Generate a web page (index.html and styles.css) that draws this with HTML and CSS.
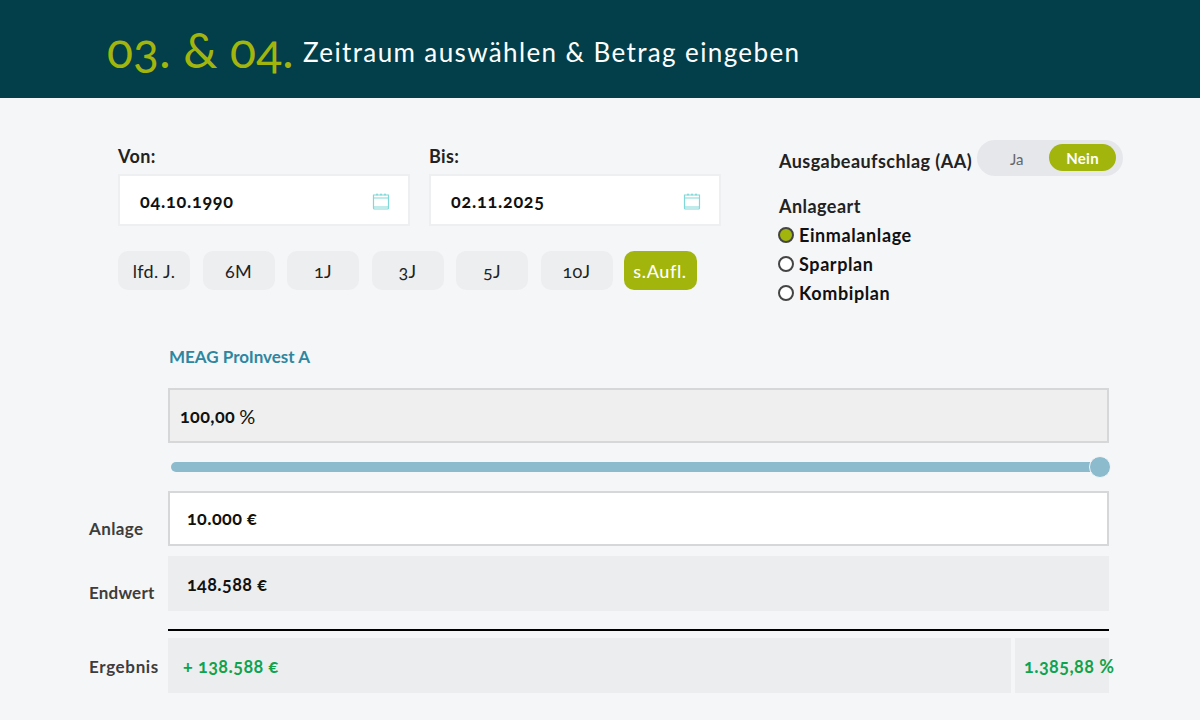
FILE: index.html
```html
<!DOCTYPE html>
<html lang="de">
<head>
<meta charset="utf-8">
<title>Zeitraum auswählen &amp; Betrag eingeben</title>
<link rel="stylesheet" href="styles.css">
</head>
<body>
<header class="hero">
  <span class="hero-num">03. &amp; 04.</span>
  <h1 class="hero-title">Zeitraum auswählen &amp; Betrag eingeben</h1>
</header>
<main class="page">
  <section class="top">
    <div class="dates">
      <div class="date-row">
        <div class="date-field">
          <label class="date-label">Von:</label>
          <div class="date-box"><span class="date-value">04.10.1990</span>
            <svg class="cal" viewBox="0 0 18 18" width="18" height="18"><path d="M1.5 3h15v13a1 1 0 0 1-1 1h-13a1 1 0 0 1-1-1z M1.5 6h15 M1.5 15h15" fill="none" stroke="#80d8d8" stroke-width="1.2"/><circle cx="5" cy="2.5" r="1" fill="#80d8d8"/><circle cx="9" cy="2.5" r="1" fill="#80d8d8"/><circle cx="13" cy="2.5" r="1" fill="#80d8d8"/></svg>
          </div>
        </div>
        <div class="date-field">
          <label class="date-label">Bis:</label>
          <div class="date-box"><span class="date-value">02.11.2025</span>
            <svg class="cal" viewBox="0 0 18 18" width="18" height="18"><path d="M1.5 3h15v13a1 1 0 0 1-1 1h-13a1 1 0 0 1-1-1z M1.5 6h15 M1.5 15h15" fill="none" stroke="#80d8d8" stroke-width="1.2"/><circle cx="5" cy="2.5" r="1" fill="#80d8d8"/><circle cx="9" cy="2.5" r="1" fill="#80d8d8"/><circle cx="13" cy="2.5" r="1" fill="#80d8d8"/></svg>
          </div>
        </div>
      </div>
      <div class="ranges">
        <button class="range">lfd. J.</button>
        <button class="range">6M</button>
        <button class="range">1J</button>
        <button class="range">3J</button>
        <button class="range">5J</button>
        <button class="range">10J</button>
        <button class="range range-on">s.Aufl.</button>
      </div>
    </div>
    <div class="options">
      <div class="aa-row">
        <span class="opt-label aa-label">Ausgabeaufschlag (AA)</span>
        <div class="toggle"><span class="toggle-off">Ja</span><span class="toggle-on">Nein</span></div>
      </div>
      <div class="opt-label type-title">Anlageart</div>
      <div class="radio"><span class="dot dot-on"></span>Einmalanlage</div>
      <div class="radio"><span class="dot"></span>Sparplan</div>
      <div class="radio"><span class="dot"></span>Kombiplan</div>
    </div>
  </section>
  <section class="calc">
    <div class="fund">MEAG ProInvest A</div>
    <div class="box box-share"><b class="val">100,00</b> <span class="unit">%</span></div>
    <div class="slider"><span class="thumb"></span></div>
    <div class="row row-anlage">
      <span class="row-label">Anlage</span>
      <div class="box box-input"><b class="val">10.000 €</b></div>
    </div>
    <div class="row row-end">
      <span class="row-label">Endwert</span>
      <div class="box box-grey"><b class="val">148.588 €</b></div>
    </div>
    <div class="rule"></div>
    <div class="row row-result">
      <span class="row-label">Ergebnis</span>
      <div class="result-cells">
        <div class="cell cell-main"><span class="gain">+ 138.588 €</span></div>
        <div class="cell cell-pct"><span class="gain">1.385,88 %</span></div>
      </div>
    </div>
  </section>
</main>
</body>
</html>
```
FILE: styles.css
```css
* { box-sizing: border-box; }
html, body { margin: 0; padding: 0; }
body {
  width: 1200px; height: 720px; overflow: hidden;
  background: #f5f6f8; color: #111;
  font-family: "Lato", "Open Sans", sans-serif;
  font-variant-numeric: oldstyle-nums;
}
.hero {
  height: 98px; background: #023f4a;
  display: flex; align-items: center; padding-left: 107px; gap: 9px;
}
.hero-num { font-size: 48px; font-weight: 400; color: #a2b50c; letter-spacing: .2px; }
.hero-title { margin: 6px 0 0; font-size: 26px; font-weight: 400; color: #fff; letter-spacing: 1.38px; }
.page { display: block; }
.top { display: flex; padding: 42px 0 0 118px; height: 251px; }
.dates { width: 661px; padding-top: 6px; }
.date-row { display: flex; gap: 19px; }
.date-field { width: 292px; }
.date-label { display: block; font-size: 18px; font-weight: 700; line-height: 20px; margin-bottom: 8px; color: #222; letter-spacing: .4px; }
.date-box {
  height: 52px; background: #fff; border: 2px solid #eeeff1;
  display: flex; align-items: center; justify-content: space-between;
  padding: 0 18px 0 20px;
}
.date-value { font-size: 18px; font-weight: 700; letter-spacing: .75px; margin-top: 2px; }
.cal { margin-top: 2px; }
.ranges { display: flex; gap: 12.5px; margin-top: 25px; }
.range {
  width: 72px; height: 39px; border: 0; border-radius: 10px; background: #eceef0;
  font: inherit; font-size: 18px; color: #222; padding: 0; letter-spacing: .3px;
  font-variant-numeric: oldstyle-nums;
}
.range-on { background: #a2b50c; color: #fff; width: 73px; margin-left: -1.5px; letter-spacing: .6px; font-weight: 500; }
.options { width: 345px; }
.aa-row { display: flex; align-items: flex-start; gap: 5px; height: 36px; }
.opt-label { font-size: 18px; font-weight: 700; color: #222; letter-spacing: .45px; }
.aa-label { line-height: 22px; margin-top: 10px; }
.toggle {
  width: 146px; height: 36px; border-radius: 18px; background: #e6e7ea;
  display: flex; align-items: flex-start; justify-content: space-between; padding: 4px 7px 0 33px;
}
.toggle-off { font-size: 15px; color: #666; line-height: 31px; }
.toggle-on {
  width: 67px; height: 27px; border-radius: 14px; background: #a2b50c; color: #fff;
  font-size: 15px; font-weight: 700; letter-spacing: .3px; line-height: 29px; text-align: center;
}
.type-title { margin-top: 18px; line-height: 24px; }
.radio { display: flex; align-items: center; gap: 5px; height: 29px; margin-left: -1px; font-size: 18px; font-weight: 700; color: #111; letter-spacing: .6px; position: relative; top: 2px; }
.dot { width: 16px; height: 16px; border-radius: 50%; border: 2px solid #444; background: #fff; }
.dot-on { background: #a2b50c; }
.calc { padding-left: 168px; width: 1109px; }
.fund { font-size: 17px; font-weight: 700; color: #2e86a0; padding-left: 1px; line-height: 20px; margin-top: -2px; margin-bottom: 21px; }
.box { width: 941px; height: 55px; display: flex; align-items: center; font-size: 18px; }
.box-share { background: #efefef; border: 2px solid #d6d7d8; padding-left: 10px; gap: 4px; }
.box-input { background: #fff; border: 2px solid #d6d7d8; padding: 0 0 2px 17px; }
.box-grey { background: #ecedef; padding-left: 19px; }
.val { font-weight: 700; color: #111; letter-spacing: .4px; }
.unit { font-size: 20px; }
.slider { position: relative; width: 929px; height: 10px; margin: 19px 0 19px 3px; border-radius: 5px; background: #8bbbcd; }
.thumb { position: absolute; right: -11px; top: -6px; width: 22px; height: 22px; border-radius: 50%; background: #8bbbcd; border: 1px solid #f5f6f8; }
.row { position: relative; }
.row-label { position: absolute; left: -79px; font-size: 17px; font-weight: 700; color: #3d3d3d; letter-spacing: .4px; }
.row-anlage .row-label { top: 27px; }
.row-end { margin-top: 10px; }
.row-end .row-label { top: 26px; letter-spacing: .2px; }
.rule { width: 941px; height: 2px; background: #000; margin: 18px 0 7px; }
.row-result .row-label { top: 18px; letter-spacing: .65px; }
.result-cells { display: flex; gap: 4px; width: 941px; height: 55px; }
.cell { background: #ecedef; display: flex; align-items: center; white-space: nowrap; }
.cell-main { width: 843px; padding-left: 15px; }
.cell-pct { width: 94px; padding-left: 9px; }
.gain { font-size: 18px; font-weight: 700; color: #0fa34e; letter-spacing: .45px; }
```
